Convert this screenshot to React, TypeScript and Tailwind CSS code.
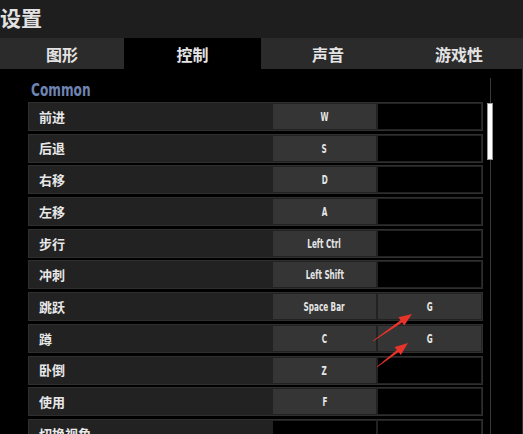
import React from 'react';

type Binding = { label: string; primary: string | null; secondary: string | null };

const bindings: Binding[] = [
    { label: '前进', primary: 'W', secondary: null },
    { label: '后退', primary: 'S', secondary: null },
    { label: '右移', primary: 'D', secondary: null },
    { label: '左移', primary: 'A', secondary: null },
    { label: '步行', primary: 'Left Ctrl', secondary: null },
    { label: '冲刺', primary: 'Left Shift', secondary: null },
    { label: '跳跃', primary: 'Space Bar', secondary: 'G' },
    { label: '蹲', primary: 'C', secondary: 'G' },
    { label: '卧倒', primary: 'Z', secondary: null },
    { label: '使用', primary: 'F', secondary: null },
    { label: '切换视角', primary: null, secondary: null },
];

const tabs = [
    { name: '图形', w: 'w-[124px]', active: false },
    { name: '控制', w: 'w-[137px]', active: true },
    { name: '声音', w: 'w-[134px]', active: false },
    { name: '游戏性', w: 'w-[128px]', active: false },
];

// red annotation arrow, tapered shaft + head
const arrowPoints = (x1: number, y1: number, x2: number, y2: number) => {
    const dx = x2 - x1, dy = y2 - y1;
    const len = Math.hypot(dx, dy);
    const ux = dx / len, uy = dy / len;
    const nx = -uy, ny = ux;
    const bx = x2 - 13 * ux, by = y2 - 13 * uy;
    const p = (x: number, y: number) => `${x.toFixed(1)},${y.toFixed(1)}`;
    return [
        p(x1 + 0.4 * nx, y1 + 0.4 * ny),
        p(bx + 1.4 * nx, by + 1.4 * ny),
        p(bx + 5 * nx, by + 5 * ny),
        p(x2, y2),
        p(bx - 5 * nx, by - 5 * ny),
        p(bx - 1.4 * nx, by - 1.4 * ny),
        p(x1 - 0.4 * nx, y1 - 0.4 * ny),
    ].join(' ');
};

const KeyCell: React.FC<{ value: string | null; className?: string }> = ({ value, className }) => (
    <div className={`w-[103px] h-[25px] flex items-center justify-center ${value ? 'bg-[#353535]' : 'bg-black'} ${className ?? ''}`}>
        {value && (
            <span className="inline-block whitespace-nowrap text-[13px] font-bold text-[#e6e6e6] leading-none scale-x-[0.62] [font-family:'DejaVu_Sans',sans-serif] font-stretch-condensed">
                {value}
            </span>
        )}
    </div>
);

const App: React.FC = () => {
    return (
        <div className="relative w-[523px] h-[434px] overflow-hidden bg-black [font-family:'Noto_Sans_CJK_SC','Noto_Sans',sans-serif]">
            <header className="h-[38px] bg-[#1e1e1e] flex items-center">
                <span className="text-[21px] font-bold text-[#e2e2e2] leading-none -mt-[4px]">设置</span>
            </header>

            <nav className="h-[31px] flex">
                {tabs.map(tab => (
                    <div key={tab.name} className={`${tab.w} flex items-center justify-center text-[16px] font-bold text-[#e4e4e4] ${tab.active ? 'bg-black' : 'bg-[#2b2b2b]'}`}>
                        {tab.name}
                    </div>
                ))}
            </nav>

            <div className="flex h-[365px] border-r border-[#2e2e2e]">
                <div className="ml-[28px] w-[455px] flex flex-col">
                    <div className="h-[33px] shrink-0 pl-[3px] pt-[8px]">
                        <span className="inline-block origin-left scale-x-[0.75] text-[18px] font-bold text-[#6f84b3] leading-none [font-family:'DejaVu_Sans',sans-serif] font-stretch-condensed">
                            Common
                        </span>
                    </div>
                    <div className="flex flex-col gap-[2.7px]">
                        {bindings.map(b => (
                            <div key={b.label} className="h-[29px] shrink-0 flex items-center bg-[#222222] border border-[#2f2f2f] pr-[1px]">
                                <span className="flex-1 pl-[10px] text-[13px] font-bold text-[#e8e8e8]">{b.label}</span>
                                <KeyCell value={b.primary} />
                                <KeyCell value={b.secondary} className="ml-[2px]" />
                            </div>
                        ))}
                    </div>
                </div>

                <div className="ml-[4px] w-[6px] flex flex-col items-center pt-[9px]">
                    <div className="w-px h-[25px] shrink-0 bg-[#3a3a3a]" />
                    <div className="w-[6px] h-[57px] shrink-0 bg-white border border-[#9a9a9a]" />
                    <div className="w-px flex-1 bg-[#3a3a3a]" />
                </div>
            </div>

            <svg className="absolute inset-0 pointer-events-none" width="523" height="434" viewBox="0 0 523 434">
                <polygon points={arrowPoints(373, 341, 412, 314)} fill="#e8332a" />
                <polygon points={arrowPoints(377, 367, 408, 343)} fill="#e8332a" />
            </svg>
        </div>
    );
};

export default App;
